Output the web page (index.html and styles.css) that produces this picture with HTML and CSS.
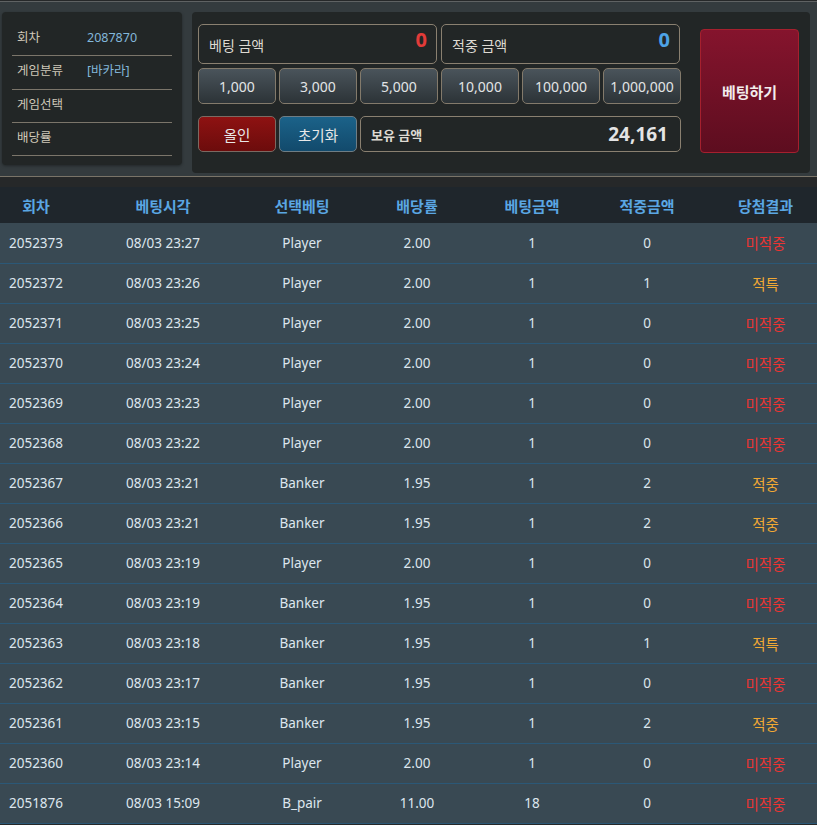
FILE: index.html
```html
<!DOCTYPE html>
<html lang="ko">
<head>
<meta charset="utf-8">
<title>베팅</title>
<link rel="stylesheet" href="styles.css">
</head>
<body>
<div class="top">
  <div class="info">
    <div class="info-row"><span class="lbl">회차</span><span class="val">2087870</span></div>
    <div class="info-row"><span class="lbl">게임분류</span><span class="val">[바카라]</span></div>
    <div class="info-row"><span class="lbl">게임선택</span><span class="val"></span></div>
    <div class="info-row"><span class="lbl">배당률</span><span class="val"></span></div>
  </div>
  <div class="bet">
    <div class="bet-left">
      <div class="row1">
        <div class="amt"><span class="amt-lbl">베팅 금액</span><span class="amt-num red">0</span></div>
        <div class="amt"><span class="amt-lbl">적중 금액</span><span class="amt-num blue">0</span></div>
      </div>
      <div class="chips">
        <button class="chip">1,000</button>
        <button class="chip">3,000</button>
        <button class="chip">5,000</button>
        <button class="chip">10,000</button>
        <button class="chip">100,000</button>
        <button class="chip">1,000,000</button>
      </div>
      <div class="row3">
        <button class="act allin">올인</button>
        <button class="act reset">초기화</button>
        <div class="hold"><span class="hold-lbl">보유 금액</span><span class="hold-num">24,161</span></div>
      </div>
    </div>
    <button class="go">베팅하기</button>
  </div>
</div>
<div class="strip"></div>
<table class="hist">
  <colgroup>
    <col class="c0"><col class="c1"><col class="c2"><col class="c3"><col class="c4"><col class="c5"><col class="c6">
  </colgroup>
  <thead>
    <tr><th>회차</th><th>베팅시각</th><th>선택베팅</th><th>배당률</th><th>베팅금액</th><th>적중금액</th><th>당첨결과</th></tr>
  </thead>
  <tbody>
    <tr><td>2052373</td><td>08/03 23:27</td><td>Player</td><td>2.00</td><td>1</td><td>0</td><td class="lose">미적중</td></tr>
    <tr><td>2052372</td><td>08/03 23:26</td><td>Player</td><td>2.00</td><td>1</td><td>1</td><td class="win">적특</td></tr>
    <tr><td>2052371</td><td>08/03 23:25</td><td>Player</td><td>2.00</td><td>1</td><td>0</td><td class="lose">미적중</td></tr>
    <tr><td>2052370</td><td>08/03 23:24</td><td>Player</td><td>2.00</td><td>1</td><td>0</td><td class="lose">미적중</td></tr>
    <tr><td>2052369</td><td>08/03 23:23</td><td>Player</td><td>2.00</td><td>1</td><td>0</td><td class="lose">미적중</td></tr>
    <tr><td>2052368</td><td>08/03 23:22</td><td>Player</td><td>2.00</td><td>1</td><td>0</td><td class="lose">미적중</td></tr>
    <tr><td>2052367</td><td>08/03 23:21</td><td>Banker</td><td>1.95</td><td>1</td><td>2</td><td class="win">적중</td></tr>
    <tr><td>2052366</td><td>08/03 23:21</td><td>Banker</td><td>1.95</td><td>1</td><td>2</td><td class="win">적중</td></tr>
    <tr><td>2052365</td><td>08/03 23:19</td><td>Player</td><td>2.00</td><td>1</td><td>0</td><td class="lose">미적중</td></tr>
    <tr><td>2052364</td><td>08/03 23:19</td><td>Banker</td><td>1.95</td><td>1</td><td>0</td><td class="lose">미적중</td></tr>
    <tr><td>2052363</td><td>08/03 23:18</td><td>Banker</td><td>1.95</td><td>1</td><td>1</td><td class="win">적특</td></tr>
    <tr><td>2052362</td><td>08/03 23:17</td><td>Banker</td><td>1.95</td><td>1</td><td>0</td><td class="lose">미적중</td></tr>
    <tr><td>2052361</td><td>08/03 23:15</td><td>Banker</td><td>1.95</td><td>1</td><td>2</td><td class="win">적중</td></tr>
    <tr><td>2052360</td><td>08/03 23:14</td><td>Player</td><td>2.00</td><td>1</td><td>0</td><td class="lose">미적중</td></tr>
    <tr><td>2051876</td><td>08/03 15:09</td><td>B_pair</td><td>11.00</td><td>18</td><td>0</td><td class="lose">미적중</td></tr>
  </tbody>
</table>
</body>
</html>
```

FILE: styles.css
```css
* { box-sizing: border-box; }
html, body { margin: 0; padding: 0; }
body {
  background: #262829;
  font-family: "Noto Sans", "Noto Sans CJK KR", sans-serif;
  color: #dde4ea;
  width: 817px;
  overflow: hidden;
}
.top {
  height: 176px;
  background: #343b3e;
  border-top: 1px solid #5f6263;
  border-bottom: 1px solid #7a7468;
  margin-top: 1px;
  display: flex;
  align-items: flex-start;
  padding: 10px 0 0 2px;
}
.info {
  width: 180px;
  height: 153px;
  background: #222626;
  border-radius: 4px;
  padding: 11px 10px 0 10px;
  box-shadow: 0 1px 3px rgba(0,0,0,0.35);
}
.info-row {
  height: 33px;
  border-bottom: 1px solid #7b756a;
  display: flex;
  align-items: center;
  font-size: 12.5px;
  line-height: 1;
  padding-left: 5px;
  padding-bottom: 2px;
}
.info-row:nth-child(2) { height: 34px; }
.lbl { color: #cfc8b8; width: 70px; }
.val { color: #82b7da; }
.bet {
  margin-left: 10px;
  width: 618px;
  height: 161px;
  background: #222626;
  border-radius: 4px;
  padding: 12px 11px 0 6px;
  display: flex;
  align-items: flex-start;
}
.bet-left { width: 483px; }
.row1 { display: flex; gap: 4px; }
.amt {
  width: 239px;
  height: 40px;
  border: 1px solid #8a8070;
  border-radius: 5px;
  display: flex;
  justify-content: space-between;
  padding: 0 9px 0 10px;
}
.amt-lbl { font-size: 14px; line-height: 1; color: #dedad2; margin-top: 14px; }
.amt-num { font-size: 20px; font-weight: 700; line-height: 1; margin-top: 5px; }
.red { color: #e23b39; }
.blue { color: #4da3e6; }
.chips { display: flex; gap: 3px; margin-top: 4px; }
button {
  font-family: inherit;
  margin: 0;
  cursor: pointer;
}
.chip {
  width: 78px;
  height: 36px;
  border: 1px solid #837a6b;
  border-radius: 5px;
  background: linear-gradient(#4a545b, #2c3337);
  color: #e2e4e6;
  font-size: 14px;
  padding: 0;
}
.row3 { display: flex; gap: 3px; margin-top: 12px; }
.act {
  width: 78px;
  height: 36px;
  border-radius: 5px;
  font-size: 14.5px;
  color: #e8e8e8;
  padding: 0;
}
.allin {
  background: linear-gradient(#8e1212, #6c0c0c);
  border: 1px solid #7b6a62;
}
.reset {
  background: linear-gradient(#1b6289, #124a6c);
  border: 1px solid #6f7d84;
}
.hold {
  width: 321px;
  height: 36px;
  border: 1px solid #8a8070;
  border-radius: 5px;
  display: flex;
  justify-content: space-between;
  align-items: center;
  padding: 0 12px 0 10px;
}
.hold-lbl { font-size: 13px; font-weight: 700; color: #dedad2; }
.hold-num { font-size: 19px; font-weight: 700; color: #e4e4e4; }
.go {
  margin-left: 19px;
  margin-top: 5px;
  width: 100px;
  height: 124px;
  border: 1px solid #a5202e;
  border-radius: 4px;
  background: linear-gradient(#85142d, #5d0d1f);
  color: #f2ecec;
  font-size: 15px;
  font-weight: 700;
  padding: 0;
}
.strip { height: 10px; background: #262829; }
.hist {
  width: 817px;
  border-collapse: collapse;
  table-layout: fixed;
}
.c0 { width: 72px; }
.c1 { width: 182px; }
.c2 { width: 96px; }
.c3 { width: 134px; }
.c4 { width: 96px; }
.c5 { width: 134px; }
.c6 { width: 103px; }
.hist th {
  height: 36px;
  background: #1f262c;
  color: #5aa6e3;
  font-size: 15px;
  font-weight: 700;
  text-align: center;
  padding: 0;
}
.hist td {
  height: 40px;
  background: #394953;
  border-bottom: 1px solid #2b5877;
  color: #dde6ee;
  font-size: 13.5px;
  text-align: center;
  padding: 0;
}
.hist td.lose { color: #ea3533; font-size: 14.5px; }
.hist td.win { color: #f1a833; font-size: 14.5px; }
```
